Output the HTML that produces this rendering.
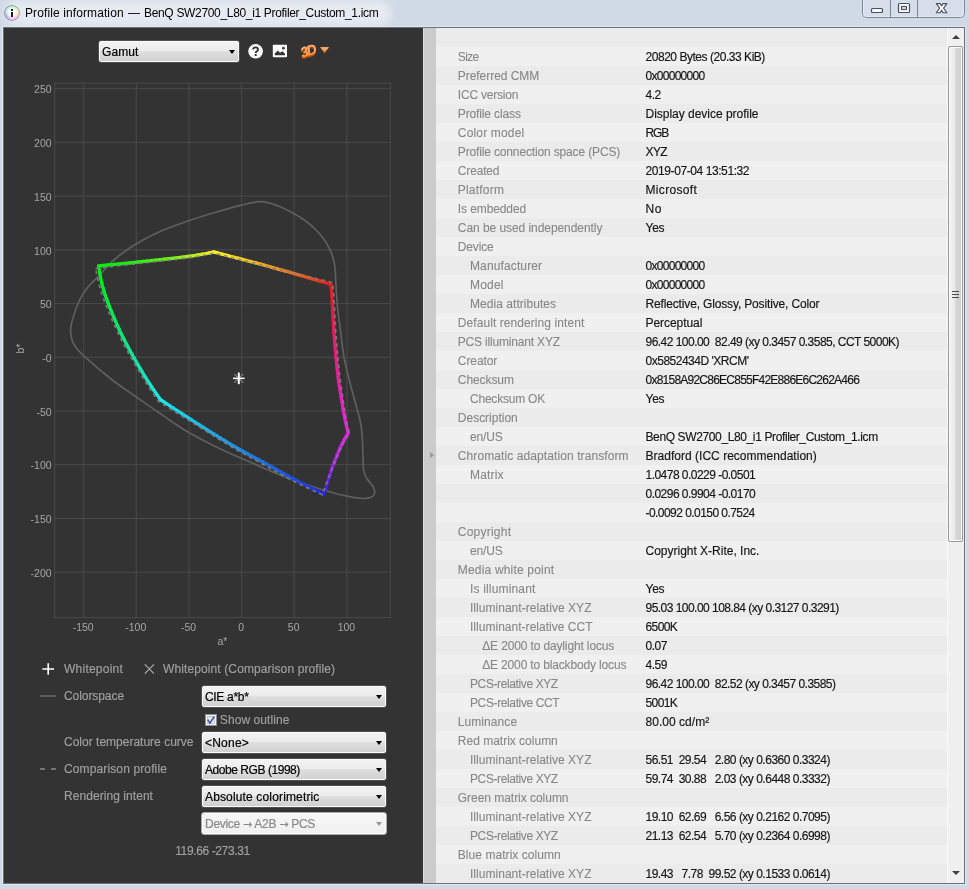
<!DOCTYPE html><html><head><meta charset="utf-8"><title>Profile information</title><style>
html,body{margin:0;padding:0}
body{width:969px;height:889px;position:relative;overflow:hidden;background:#d0d9e6;font-family:"Liberation Sans", sans-serif;font-size:12px;color:#000}
.abs{position:absolute}
.t{position:absolute;white-space:pre;line-height:19px;height:19px}
.tb{will-change:transform}
.row{position:absolute;left:0;width:512px;height:19px}
.lab{color:#878787;-webkit-text-stroke:0.1px #878787}
.val{color:#141414;-webkit-text-stroke:0.15px #141414}
.dd{position:absolute;box-sizing:border-box;border:1px solid #505050;border-radius:3px;box-shadow:inset 0 0 0 1px #fcfcfc;background:linear-gradient(#f3f3f3 0%,#ebebeb 47%,#dedede 51%,#cfcfcf 100%)}
.dd .t{left:3px;top:2px;color:#000;-webkit-text-stroke:0.2px currentColor}
.dd .arr{position:absolute;right:4px;top:9px;width:0;height:0;border-left:3.7px solid transparent;border-right:3.7px solid transparent;border-top:4.2px solid #000}
.ll{color:#a0a0a0;-webkit-text-stroke:0.15px #a0a0a0}
</style></head><body>
<div class="abs" style="left:0;top:0;width:969px;height:28px;background:#d0d9e6;overflow:hidden"><div class="abs" style="left:14px;top:9px;width:368px;height:8px;border-radius:8px;background:rgba(255,255,255,.48);box-shadow:0 0 9px 9px rgba(255,255,255,.48)"></div></div>
<div class="abs" style="left:5px;top:6px;width:14px;height:14px;border-radius:50%;background:radial-gradient(circle,#fff 0%,#fff 30%,rgba(255,255,255,.6) 58%,rgba(255,255,255,0) 88%),conic-gradient(from 0deg,#6fe07f,#e6e070 60deg,#f08484 120deg,#e070e0 180deg,#6464d0 240deg,#70e0e8 300deg,#6fe07f);box-shadow:0 0 0 0.8px rgba(70,75,110,.6)"></div>
<div class="abs" style="left:10.9px;top:9.1px;width:2.2px;height:1.6px;background:#1c1c1c"></div><div class="abs" style="left:10.9px;top:12.1px;width:2.2px;height:4.7px;background:#1c1c1c"></div>
<div class="t tb" style="left:25.0px;top:4px;color:#000"><span style="letter-spacing:0.104px;">Profile information</span></div>
<div class="t tb" style="left:127.9px;top:4px;color:#000"><span style="letter-spacing:0.5px;">—</span></div>
<div class="t tb" style="left:143.8px;top:4px;color:#000"><span style="letter-spacing:-0.327px;">BenQ SW2700_L80_i1 Profiler_Custom_1.icm</span></div>
<svg class="abs" style="left:860px;top:0" width="107" height="20" viewBox="0 0 107 20">
<path d="M2.5 -1 V13.5 Q2.5 17.5 6.5 17.5 H100.5 Q104.5 17.5 104.5 13.5 V-1" fill="#d6deea" stroke="#7d8796" stroke-width="1"/>
<path d="M3.5 0 V13.5 Q3.5 16.5 6.5 16.5 H100.5 Q103.5 16.5 103.5 13.5 V0" fill="none" stroke="#eef2f8" stroke-width="1" opacity="0.7"/>
<path d="M30.5 0 V17 M57.5 0 V17" stroke="#7d8796" stroke-width="1"/>
<rect x="11.5" y="8.5" width="11" height="4" rx="1" fill="#fafafa" stroke="#4a5060" stroke-width="1.2"/>
<rect x="38.5" y="3.5" width="11" height="9" rx="1" fill="#fafafa" stroke="#4a5060" stroke-width="1.2"/>
<rect x="41.5" y="6.5" width="5" height="3" fill="#d6deea" stroke="#4a5060" stroke-width="1.1"/>
<path d="M76.3 3.6 h3.9 l1.4 2.3 l1.4 -2.3 h3.9 l-3.3 4.5 l3.3 4.6 h-3.9 l-1.4 -2.4 l-1.4 2.4 h-3.9 l3.3 -4.6 z" fill="#fafafa" stroke="#4a5060" stroke-width="1.1" stroke-linejoin="round"/>
</svg>
<div class="abs" style="left:3px;top:27px;width:962px;height:857px;background:#6a717c"></div>
<div class="abs" style="left:2px;top:26px;width:964px;height:859px;box-sizing:border-box;border:1px solid #e4eaf2;opacity:.8"></div>
<div class="abs" id="content" style="will-change:transform;left:4px;top:28px;width:960px;height:855px;background:#f0f0f0;overflow:hidden">
<div class="abs" id="left" style="left:0;top:0;width:419px;height:855px;background:#333333;overflow:hidden">
<div class="dd" style="left:94px;top:12px;width:142px;height:23px"><div class="t"><span style="letter-spacing:0.097px;">Gamut</span></div><div class="arr"></div></div>
<svg class="abs" style="left:243px;top:14.5px" width="17" height="17" viewBox="0 0 17 17"><circle cx="8.6" cy="8.3" r="7.3" fill="#ffffff"/>
<path d="M6.2 6.6 Q6.2 4.4 8.6 4.4 Q11 4.4 11 6.4 Q11 7.6 9.8 8.3 Q8.7 8.9 8.7 10" fill="none" stroke="#333" stroke-width="1.9"/><rect x="7.7" y="11" width="2" height="2" fill="#333"/></svg>
<svg class="abs" style="left:268px;top:16px" width="16" height="14" viewBox="0 0 16 14"><rect x="0.8" y="0.8" width="14.2" height="12.4" rx="0.8" fill="#ffffff"/>
<path d="M2.8 11.2 V9.6 L5.8 6.4 L8 8.8 L10.4 7.2 L13 9.8 V11.2 Z" fill="#333"/><circle cx="11.4" cy="4.2" r="1.35" fill="#333"/></svg>
<svg class="abs" style="left:292px;top:10px" width="38" height="26" viewBox="296 38 38 26">
<defs><linearGradient id="g3d" x1="0" y1="0" x2="0" y2="1"><stop offset="0" stop-color="#ffc48c"/><stop offset="1" stop-color="#ff8c34"/></linearGradient>
<linearGradient id="garr" x1="0" y1="0" x2="0" y2="1"><stop offset="0" stop-color="#ffc088"/><stop offset="1" stop-color="#e87420"/></linearGradient></defs>
<g transform="translate(308.0,51.0) rotate(-18)" font-family='&quot;Liberation Sans&quot;, sans-serif' font-size="14" font-weight="bold" font-style="italic" text-anchor="middle" letter-spacing="-1.5">
<text x="-0.9" y="6.3" fill="#a84a10">3D</text><text x="-0.6" y="5.7" fill="#b85414">3D</text><text x="-0.3" y="5.1" fill="#cc621c">3D</text>
<text x="0" y="4.5" fill="url(#g3d)">3D</text></g>
<path d="M320 47 H329.2 L324.6 53.2 Z" fill="url(#garr)" stroke="#8a4410" stroke-width="0.5" stroke-opacity="0.6"/></svg>
<svg class="abs" style="left:0;top:0" width="419" height="855" viewBox="4 28 419 855">
<path d="M83.7 83.1V617.6M136.3 83.1V617.6M189.0 83.1V617.6M241.6 83.1V617.6M294.2 83.1V617.6M346.9 83.1V617.6M54.7 572.2H390.4M54.7 518.5H390.4M54.7 464.7H390.4M54.7 411.0H390.4M54.7 357.3H390.4M54.7 303.6H390.4M54.7 249.9H390.4M54.7 196.1H390.4M54.7 142.4H390.4M54.7 88.7H390.4" stroke="#4a4a4a" stroke-width="1" fill="none"/>
<rect x="54.7" y="83.1" width="335.7" height="534.5" fill="none" stroke="#4a4a4a" stroke-width="1"/>
<text x="51.6" y="576.8" text-anchor="end" font-family="'Liberation Sans', sans-serif" font-size="10.5" fill="#a6a6a6">-200</text>
<text x="51.6" y="523.1" text-anchor="end" font-family="'Liberation Sans', sans-serif" font-size="10.5" fill="#a6a6a6">-150</text>
<text x="51.6" y="469.3" text-anchor="end" font-family="'Liberation Sans', sans-serif" font-size="10.5" fill="#a6a6a6">-100</text>
<text x="51.6" y="415.6" text-anchor="end" font-family="'Liberation Sans', sans-serif" font-size="10.5" fill="#a6a6a6">-50</text>
<text x="51.6" y="361.9" text-anchor="end" font-family="'Liberation Sans', sans-serif" font-size="10.5" fill="#a6a6a6">-0</text>
<text x="51.6" y="308.2" text-anchor="end" font-family="'Liberation Sans', sans-serif" font-size="10.5" fill="#a6a6a6">50</text>
<text x="51.6" y="254.5" text-anchor="end" font-family="'Liberation Sans', sans-serif" font-size="10.5" fill="#a6a6a6">100</text>
<text x="51.6" y="200.7" text-anchor="end" font-family="'Liberation Sans', sans-serif" font-size="10.5" fill="#a6a6a6">150</text>
<text x="51.6" y="147.0" text-anchor="end" font-family="'Liberation Sans', sans-serif" font-size="10.5" fill="#a6a6a6">200</text>
<text x="51.6" y="93.3" text-anchor="end" font-family="'Liberation Sans', sans-serif" font-size="10.5" fill="#a6a6a6">250</text>
<text x="83.2" y="631.3" text-anchor="middle" font-family="'Liberation Sans', sans-serif" font-size="10.5" fill="#a6a6a6">-150</text>
<text x="135.8" y="631.3" text-anchor="middle" font-family="'Liberation Sans', sans-serif" font-size="10.5" fill="#a6a6a6">-100</text>
<text x="188.5" y="631.3" text-anchor="middle" font-family="'Liberation Sans', sans-serif" font-size="10.5" fill="#a6a6a6">-50</text>
<text x="241.1" y="631.3" text-anchor="middle" font-family="'Liberation Sans', sans-serif" font-size="10.5" fill="#a6a6a6">0</text>
<text x="293.7" y="631.3" text-anchor="middle" font-family="'Liberation Sans', sans-serif" font-size="10.5" fill="#a6a6a6">50</text>
<text x="346.4" y="631.3" text-anchor="middle" font-family="'Liberation Sans', sans-serif" font-size="10.5" fill="#a6a6a6">100</text>
<text x="222.5" y="645" text-anchor="middle" font-family="'Liberation Sans', sans-serif" font-size="10.5" fill="#a6a6a6">a*</text>
<text x="0" y="0" transform="translate(24.3,348.5) rotate(-90)" text-anchor="middle" font-family="'Liberation Sans', sans-serif" font-size="10.5" fill="#a6a6a6">b*</text>
<path d="M260.9 201.7C266.8 201.8 271.7 203.6 277.0 205.5C282.3 207.4 288.2 210.5 292.9 213.0C297.6 215.5 301.2 217.8 305.0 220.5C308.8 223.2 312.6 226.6 315.6 229.5C318.6 232.4 320.9 235.2 323.0 238.0C325.1 240.8 326.5 243.3 328.0 246.0C329.5 248.7 330.8 251.2 331.8 254.0C332.8 256.8 333.6 259.8 334.2 262.6C334.8 265.4 335.1 268.3 335.3 271.0C335.5 273.7 335.4 275.0 335.6 279.0C335.8 283.0 336.2 289.8 336.6 295.0C337.0 300.2 337.2 304.2 337.8 310.0C338.4 315.8 339.4 322.2 340.4 330.0C341.4 337.8 342.5 348.5 344.0 357.0C345.5 365.5 347.4 372.8 349.5 381.0C351.6 389.2 354.6 399.9 356.3 406.4C358.1 412.9 359.0 415.2 360.0 420.0C361.0 424.8 361.6 428.7 362.1 434.9C362.6 441.1 362.8 451.3 363.0 457.2C363.2 463.1 363.0 466.6 363.6 470.2C364.2 473.8 365.3 475.9 366.8 478.5C368.3 481.1 371.4 483.7 372.7 486.0C374.0 488.3 374.9 490.6 374.7 492.5C374.5 494.4 373.3 496.1 371.4 497.1C369.4 498.1 367.1 498.6 363.0 498.5C358.9 498.4 353.4 497.6 346.9 496.2C340.4 494.8 332.8 492.8 324.0 490.2C315.2 487.6 303.9 483.9 294.3 480.4C284.7 476.9 275.1 472.8 266.4 469.2C257.7 465.6 249.6 461.9 241.9 458.5C234.2 455.1 229.0 453.2 220.0 448.8C211.0 444.4 197.5 437.5 188.0 432.0C178.5 426.5 171.8 421.4 163.2 415.6C154.6 409.8 145.0 403.0 136.4 397.0C127.8 391.0 120.4 386.4 111.6 379.5C102.8 372.6 90.1 361.7 83.7 355.7C77.3 349.7 75.6 347.4 73.4 343.3C71.2 339.2 70.8 334.9 70.6 331.0C70.4 327.1 70.9 325.2 72.4 320.0C73.9 314.8 77.0 305.5 79.6 300.0C82.2 294.5 84.9 290.9 88.0 287.0C91.1 283.1 93.5 281.4 98.0 276.7C102.5 272.0 108.6 264.5 115.0 259.0C121.4 253.5 128.9 248.3 136.4 243.7C143.9 239.1 151.4 235.3 160.0 231.5C168.6 227.7 178.8 224.2 188.0 221.0C197.2 217.8 206.1 215.1 215.0 212.5C223.9 209.9 233.7 207.0 241.3 205.2C249.0 203.4 254.9 201.6 260.9 201.7Z" fill="none" stroke="#5f5f5f" stroke-width="1.7"/>
<g fill="none" stroke-width="3.3" stroke-linecap="round">
<path d="M98.6 265.9L99.1 265.8L99.7 265.8L100.3 265.7L101.0 265.7" stroke="rgb(0,236,16)"/>
<path d="M101.0 265.7L101.7 265.6L102.4 265.5L103.2 265.5L104.0 265.4" stroke="rgb(1,236,16)"/>
<path d="M104.0 265.4L104.8 265.3L105.7 265.2L106.6 265.1L107.5 265.0" stroke="rgb(3,236,16)"/>
<path d="M107.5 265.0L108.5 265.0L109.4 264.9L110.4 264.8L111.5 264.7" stroke="rgb(6,236,16)"/>
<path d="M111.5 264.7L112.5 264.6L113.6 264.5L114.7 264.4L115.8 264.3" stroke="rgb(10,236,17)"/>
<path d="M115.8 264.3L116.9 264.1L118.1 264.0L119.2 263.9L120.4 263.8" stroke="rgb(14,236,17)"/>
<path d="M120.4 263.8L121.6 263.7L122.8 263.6L124.0 263.4L125.2 263.3" stroke="rgb(20,236,18)"/>
<path d="M125.2 263.3L126.4 263.2L127.6 263.1L128.9 263.0L130.1 262.8" stroke="rgb(27,236,18)"/>
<path d="M130.1 262.8L131.3 262.7L132.5 262.6L133.8 262.5L135.0 262.3" stroke="rgb(35,236,19)"/>
<path d="M135.0 262.3L136.2 262.2L137.1 262.1L138.0 262.0L138.9 261.9" stroke="rgb(43,236,19)"/>
<path d="M138.9 261.9L139.8 261.8L140.8 261.7L141.7 261.6L142.7 261.5" stroke="rgb(50,236,20)"/>
<path d="M142.7 261.5L143.7 261.4L144.7 261.3L145.7 261.2L146.7 261.1" stroke="rgb(57,236,21)"/>
<path d="M146.7 261.1L147.8 261.0L148.8 260.9L149.9 260.8L151.0 260.6" stroke="rgb(66,237,21)"/>
<path d="M151.0 260.6L152.0 260.5L153.1 260.4L154.2 260.3L155.3 260.2" stroke="rgb(75,237,22)"/>
<path d="M155.3 260.2L156.4 260.1L157.5 259.9L158.6 259.8L159.7 259.7" stroke="rgb(85,237,23)"/>
<path d="M159.7 259.7L160.8 259.6L161.9 259.5L163.0 259.3L164.1 259.2" stroke="rgb(95,237,24)"/>
<path d="M164.1 259.2L165.2 259.1L166.3 259.0L167.4 258.9L168.4 258.7" stroke="rgb(106,237,24)"/>
<path d="M168.4 258.7L169.5 258.6L170.6 258.5L171.7 258.4L172.7 258.3" stroke="rgb(117,237,25)"/>
<path d="M172.7 258.3L173.7 258.2L174.8 258.0L175.8 257.9L176.8 257.8" stroke="rgb(128,237,26)"/>
<path d="M176.8 257.8L177.8 257.7L178.8 257.6L179.7 257.5L180.7 257.3" stroke="rgb(139,237,27)"/>
<path d="M180.7 257.3L181.6 257.2L182.5 257.1L183.4 257.0L184.3 256.9" stroke="rgb(150,237,28)"/>
<path d="M184.3 256.9L185.1 256.8L185.9 256.7L186.8 256.6L187.5 256.5" stroke="rgb(159,237,29)"/>
<path d="M187.5 256.5L188.3 256.4L189.8 256.2L191.2 256.0L192.6 255.8" stroke="rgb(172,237,30)"/>
<path d="M192.6 255.8L194.0 255.6L195.3 255.4L196.6 255.2L197.8 255.0" stroke="rgb(188,238,31)"/>
<path d="M197.8 255.0L199.0 254.8L200.2 254.6L201.3 254.4L202.4 254.2" stroke="rgb(203,238,32)"/>
<path d="M202.4 254.2L203.4 254.0L204.4 253.8L205.4 253.7L206.3 253.5" stroke="rgb(217,238,33)"/>
<path d="M206.3 253.5L207.2 253.3L208.0 253.1L208.9 253.0L209.6 252.8" stroke="rgb(229,238,34)"/>
<path d="M209.6 252.8L210.4 252.7L211.1 252.5L211.7 252.4L212.4 252.3" stroke="rgb(240,238,35)"/>
<path d="M212.4 252.3L212.9 252.2L213.5 252.1L214.0 252.0" stroke="rgb(247,238,36)"/>
<path d="M214.0 252.0L214.5 252.1L215.0 252.3L215.6 252.4L216.2 252.6" stroke="rgb(250,238,36)"/>
<path d="M216.2 252.6L216.9 252.7L217.5 252.9L218.2 253.1L218.9 253.3" stroke="rgb(250,236,36)"/>
<path d="M218.9 253.3L219.7 253.5L220.4 253.7L221.2 253.9L222.0 254.1" stroke="rgb(250,234,36)"/>
<path d="M222.0 254.1L222.9 254.3L223.7 254.5L224.6 254.8L225.5 255.0" stroke="rgb(249,231,36)"/>
<path d="M225.5 255.0L226.5 255.2L227.4 255.5L228.4 255.7L229.3 256.0" stroke="rgb(249,227,36)"/>
<path d="M229.3 256.0L230.3 256.3L231.3 256.5L232.4 256.8L233.4 257.1" stroke="rgb(248,222,36)"/>
<path d="M233.4 257.1L234.5 257.3L235.5 257.6L236.6 257.9L237.7 258.2" stroke="rgb(248,217,35)"/>
<path d="M237.7 258.2L238.8 258.4L239.9 258.7L241.0 259.0L242.1 259.3" stroke="rgb(247,211,35)"/>
<path d="M242.1 259.3L243.2 259.6L244.4 259.9L245.5 260.2L246.6 260.5" stroke="rgb(246,204,35)"/>
<path d="M246.6 260.5L247.8 260.8L248.9 261.1L250.1 261.4L251.2 261.7" stroke="rgb(245,197,35)"/>
<path d="M251.2 261.7L252.4 262.0L253.5 262.3L254.7 262.6L255.8 262.9" stroke="rgb(244,190,35)"/>
<path d="M255.8 262.9L256.9 263.2L258.1 263.5L259.2 263.8L260.3 264.1" stroke="rgb(244,182,34)"/>
<path d="M260.3 264.1L261.4 264.4L262.5 264.7L263.6 265.0L264.7 265.3" stroke="rgb(243,175,34)"/>
<path d="M264.7 265.3L265.8 265.6L266.9 265.9L267.9 266.2L269.0 266.5" stroke="rgb(242,167,34)"/>
<path d="M269.0 266.5L270.0 266.7L271.0 267.0L272.0 267.3L273.0 267.6" stroke="rgb(241,159,34)"/>
<path d="M273.0 267.6L273.9 267.8L274.9 268.1L276.0 268.4L277.0 268.7" stroke="rgb(240,152,34)"/>
<path d="M277.0 268.7L278.0 269.0L279.1 269.3L280.1 269.6L281.2 269.9" stroke="rgb(239,144,33)"/>
<path d="M281.2 269.9L282.3 270.2L283.3 270.5L284.4 270.8L285.5 271.1" stroke="rgb(238,135,33)"/>
<path d="M285.5 271.1L286.6 271.4L287.7 271.7L288.9 272.0L290.0 272.4" stroke="rgb(237,126,33)"/>
<path d="M290.0 272.4L291.1 272.7L292.2 273.0L293.3 273.3L294.5 273.7" stroke="rgb(236,117,33)"/>
<path d="M294.5 273.7L295.6 274.0L296.7 274.3L297.8 274.6L299.0 274.9" stroke="rgb(235,108,32)"/>
<path d="M299.0 274.9L300.1 275.3L301.2 275.6L302.3 275.9L303.4 276.2" stroke="rgb(234,98,32)"/>
<path d="M303.4 276.2L304.5 276.5L305.6 276.9L306.6 277.2L307.7 277.5" stroke="rgb(233,89,32)"/>
<path d="M307.7 277.5L308.8 277.8L309.8 278.1L310.9 278.4L311.9 278.7" stroke="rgb(232,79,31)"/>
<path d="M311.9 278.7L312.9 279.0L313.9 279.3L314.9 279.6L315.8 279.9" stroke="rgb(231,70,31)"/>
<path d="M315.8 279.9L316.8 280.1L317.7 280.4L318.7 280.7L319.6 280.9" stroke="rgb(230,61,31)"/>
<path d="M319.6 280.9L320.4 281.2L321.3 281.4L322.1 281.7L323.0 281.9" stroke="rgb(229,53,31)"/>
<path d="M323.0 281.9L323.7 282.2L324.5 282.4L325.3 282.6L326.0 282.8" stroke="rgb(228,45,30)"/>
<path d="M326.0 282.8L326.7 283.0L327.4 283.2L328.0 283.4L328.6 283.6" stroke="rgb(227,38,30)"/>
<path d="M328.6 283.6L329.2 283.7L329.8 283.9L330.3 284.1L330.8 284.2" stroke="rgb(226,33,30)"/>
<path d="M330.8 284.2L330.9 284.8L330.9 285.4L331.0 286.1L331.1 286.9" stroke="rgb(226,30,32)"/>
<path d="M331.1 286.9L331.2 287.8L331.2 288.7L331.3 289.7L331.5 290.8" stroke="rgb(226,30,36)"/>
<path d="M331.5 290.8L331.6 291.9L331.7 293.1L331.8 294.4L331.9 295.7" stroke="rgb(226,30,42)"/>
<path d="M331.9 295.7L332.0 297.1L332.1 298.5L332.2 300.0L332.2 300.8" stroke="rgb(227,30,49)"/>
<path d="M332.2 300.8L332.3 301.6L332.3 302.4L332.4 303.3L332.4 304.2" stroke="rgb(227,30,55)"/>
<path d="M332.4 304.2L332.5 305.1L332.5 306.1L332.6 307.1L332.6 308.1" stroke="rgb(227,30,60)"/>
<path d="M332.6 308.1L332.7 309.1L332.7 310.1L332.8 311.1L332.8 312.2" stroke="rgb(227,30,65)"/>
<path d="M332.8 312.2L332.9 313.2L332.9 314.3L333.0 315.4L333.1 316.5" stroke="rgb(227,30,71)"/>
<path d="M333.1 316.5L333.1 317.5L333.2 318.6L333.2 319.7L333.3 320.8" stroke="rgb(227,30,76)"/>
<path d="M333.3 320.8L333.3 321.8L333.4 322.9L333.4 324.0L333.5 325.0" stroke="rgb(228,30,82)"/>
<path d="M333.5 325.0L333.6 326.0L333.6 327.1L333.7 328.1L333.7 329.0" stroke="rgb(228,30,88)"/>
<path d="M333.7 329.0L333.8 330.0L333.9 331.1L333.9 332.1L334.0 333.2" stroke="rgb(228,30,93)"/>
<path d="M334.0 333.2L334.1 334.2L334.2 335.2L334.2 336.3L334.3 337.3" stroke="rgb(228,30,99)"/>
<path d="M334.3 337.3L334.4 338.3L334.5 339.4L334.6 340.4L334.6 341.4" stroke="rgb(228,30,104)"/>
<path d="M334.6 341.4L334.7 342.4L334.8 343.4L334.9 344.4L335.0 345.4" stroke="rgb(228,30,110)"/>
<path d="M335.0 345.4L335.1 346.4L335.1 347.4L335.2 348.4L335.3 349.4" stroke="rgb(229,30,115)"/>
<path d="M335.3 349.4L335.4 350.4L335.5 351.3L335.6 352.3L335.7 353.2" stroke="rgb(229,30,121)"/>
<path d="M335.7 353.2L335.7 354.2L335.8 355.1L335.9 356.1L336.0 357.0" stroke="rgb(229,30,126)"/>
<path d="M336.0 357.0L336.1 358.1L336.2 359.2L336.3 360.2L336.4 361.3" stroke="rgb(229,30,131)"/>
<path d="M336.4 361.3L336.5 362.3L336.6 363.4L336.7 364.4L336.8 365.5" stroke="rgb(229,30,137)"/>
<path d="M336.8 365.5L336.9 366.5L337.0 367.5L337.1 368.5L337.3 369.5" stroke="rgb(229,30,142)"/>
<path d="M337.3 369.5L337.4 370.5L337.5 371.5L337.6 372.5L337.7 373.4" stroke="rgb(229,30,148)"/>
<path d="M337.7 373.4L337.8 374.4L337.9 375.3L338.0 376.3L338.1 377.2" stroke="rgb(230,30,153)"/>
<path d="M338.1 377.2L338.3 378.2L338.4 379.1L338.5 380.0L338.6 381.1" stroke="rgb(230,30,158)"/>
<path d="M338.6 381.1L338.8 382.2L338.9 383.2L339.1 384.3L339.3 385.3" stroke="rgb(230,30,164)"/>
<path d="M339.3 385.3L339.4 386.3L339.6 387.3L339.7 388.3L339.9 389.3" stroke="rgb(230,30,169)"/>
<path d="M339.9 389.3L340.0 390.3L340.2 391.3L340.4 392.2L340.5 393.2" stroke="rgb(230,30,175)"/>
<path d="M340.5 393.2L340.7 394.2L340.9 395.1L341.0 396.1L341.2 397.1" stroke="rgb(230,30,180)"/>
<path d="M341.2 397.1L341.3 398.0L341.5 399.0L341.7 400.0L341.8 401.1" stroke="rgb(231,30,185)"/>
<path d="M341.8 401.1L342.0 402.1L342.2 403.1L342.3 404.1L342.5 405.1" stroke="rgb(231,30,191)"/>
<path d="M342.5 405.1L342.6 406.2L342.8 407.2L343.0 408.2L343.1 409.2" stroke="rgb(231,30,196)"/>
<path d="M343.1 409.2L343.3 410.2L343.4 411.2L343.6 412.2L343.8 413.1" stroke="rgb(231,30,202)"/>
<path d="M343.8 413.1L344.0 414.1L344.1 415.1L344.3 416.0L344.5 417.0" stroke="rgb(231,30,207)"/>
<path d="M344.5 417.0L344.7 418.1L345.0 419.2L345.2 420.4L345.5 421.5" stroke="rgb(231,30,213)"/>
<path d="M345.5 421.5L345.7 422.7L346.0 423.9L346.3 425.0L346.5 426.2" stroke="rgb(232,30,219)"/>
<path d="M346.5 426.2L346.8 427.3L347.1 428.3L347.3 429.3L347.5 430.3" stroke="rgb(232,30,225)"/>
<path d="M347.5 430.3L347.7 431.1L347.9 431.9L348.1 432.5L348.2 433.1" stroke="rgb(232,30,230)"/>
<path d="M348.2 433.1L347.9 433.6L347.5 434.3L347.0 435.1L346.5 435.9" stroke="rgb(231,30,232)"/>
<path d="M346.5 435.9L345.9 436.9L345.3 437.9L344.7 438.9L344.1 440.0" stroke="rgb(228,30,232)"/>
<path d="M344.1 440.0L343.6 441.0L343.0 442.0L342.5 443.0L342.0 443.9" stroke="rgb(222,31,231)"/>
<path d="M342.0 443.9L341.6 444.9L341.1 445.8L340.7 446.8L340.3 447.7" stroke="rgb(215,31,230)"/>
<path d="M340.3 447.7L339.9 448.7L339.4 449.7L339.0 450.6L338.6 451.6" stroke="rgb(206,31,230)"/>
<path d="M338.6 451.6L338.2 452.5L337.8 453.5L337.4 454.5L337.0 455.4" stroke="rgb(196,32,229)"/>
<path d="M337.0 455.4L336.6 456.4L336.2 457.4L335.8 458.3L335.4 459.3" stroke="rgb(185,32,228)"/>
<path d="M335.4 459.3L335.0 460.3L334.6 461.2L334.2 462.2L333.8 463.1" stroke="rgb(173,33,227)"/>
<path d="M333.8 463.1L333.5 464.0L333.1 465.1L332.7 466.1L332.4 467.1" stroke="rgb(160,34,225)"/>
<path d="M332.4 467.1L332.0 468.1L331.7 469.1L331.3 470.1L331.0 471.2" stroke="rgb(145,34,224)"/>
<path d="M331.0 471.2L330.7 472.2L330.3 473.3L330.0 474.2L329.7 475.2" stroke="rgb(130,35,223)"/>
<path d="M329.7 475.2L329.4 476.1L329.1 477.1L328.8 478.1L328.5 479.1" stroke="rgb(114,36,221)"/>
<path d="M328.5 479.1L328.2 480.1L327.9 481.1L327.6 482.1L327.3 483.0" stroke="rgb(97,37,220)"/>
<path d="M327.3 483.0L327.0 484.0L326.7 485.1L326.3 486.3L326.0 487.4" stroke="rgb(79,38,218)"/>
<path d="M326.0 487.4L325.6 488.6L325.3 489.8L325.0 490.9L324.7 492.0" stroke="rgb(58,39,216)"/>
<path d="M324.7 492.0L324.4 492.9L324.2 493.7L324.0 494.3" stroke="rgb(42,40,215)"/>
<path d="M324.0 494.3L323.5 494.1L323.0 493.8L322.4 493.5L321.8 493.2" stroke="rgb(36,41,214)"/>
<path d="M321.8 493.2L321.1 492.8L320.4 492.5L319.6 492.1L318.8 491.7" stroke="rgb(36,44,214)"/>
<path d="M318.8 491.7L318.0 491.3L317.1 490.9L316.2 490.4L315.3 490.0" stroke="rgb(36,48,215)"/>
<path d="M315.3 490.0L314.4 489.5L313.4 489.0L312.4 488.5L311.4 488.0" stroke="rgb(35,52,215)"/>
<path d="M311.4 488.0L310.4 487.5L309.4 487.0L308.3 486.5L307.3 485.9" stroke="rgb(35,57,216)"/>
<path d="M307.3 485.9L306.2 485.4L305.2 484.9L304.1 484.4L303.1 483.8" stroke="rgb(35,61,216)"/>
<path d="M303.1 483.8L302.0 483.3L301.0 482.8L300.0 482.3L299.0 481.7" stroke="rgb(34,66,216)"/>
<path d="M299.0 481.7L298.0 481.2L297.0 480.7L296.1 480.2L295.2 479.8" stroke="rgb(34,71,217)"/>
<path d="M295.2 479.8L294.3 479.3L293.4 478.8L292.4 478.3L291.5 477.8" stroke="rgb(34,75,217)"/>
<path d="M291.5 477.8L290.6 477.3L289.7 476.8L288.7 476.3L287.8 475.8" stroke="rgb(34,79,218)"/>
<path d="M287.8 475.8L286.9 475.3L286.0 474.8L285.0 474.3L284.1 473.8" stroke="rgb(33,83,218)"/>
<path d="M284.1 473.8L283.2 473.3L282.3 472.8L281.4 472.2L280.5 471.7" stroke="rgb(33,88,218)"/>
<path d="M280.5 471.7L279.6 471.2L278.7 470.7L277.8 470.2L276.9 469.7" stroke="rgb(33,92,219)"/>
<path d="M276.9 469.7L276.0 469.2L275.1 468.7L274.2 468.2L273.3 467.7" stroke="rgb(32,96,219)"/>
<path d="M273.3 467.7L272.4 467.2L271.6 466.7L270.7 466.3L269.8 465.8" stroke="rgb(32,100,220)"/>
<path d="M269.8 465.8L269.0 465.3L268.1 464.8L267.2 464.4L266.4 463.9" stroke="rgb(32,104,220)"/>
<path d="M266.4 463.9L265.4 463.4L264.5 462.9L263.5 462.3L262.6 461.8" stroke="rgb(32,108,220)"/>
<path d="M262.6 461.8L261.6 461.3L260.7 460.8L259.7 460.3L258.8 459.8" stroke="rgb(31,113,221)"/>
<path d="M258.8 459.8L257.9 459.3L257.0 458.8L256.0 458.4L255.1 457.9" stroke="rgb(31,117,221)"/>
<path d="M255.1 457.9L254.2 457.4L253.3 456.9L252.4 456.4L251.5 455.9" stroke="rgb(31,121,222)"/>
<path d="M251.5 455.9L250.6 455.5L249.7 455.0L248.9 454.5L248.0 454.0" stroke="rgb(31,125,222)"/>
<path d="M248.0 454.0L247.1 453.6L246.2 453.1L245.4 452.6L244.5 452.1" stroke="rgb(30,129,222)"/>
<path d="M244.5 452.1L243.6 451.7L242.8 451.2L241.9 450.7L241.0 450.2" stroke="rgb(30,133,223)"/>
<path d="M241.0 450.2L240.1 449.7L239.2 449.2L238.4 448.7L237.5 448.2" stroke="rgb(30,138,223)"/>
<path d="M237.5 448.2L236.7 447.7L235.9 447.3L235.1 446.8L234.2 446.3" stroke="rgb(30,141,224)"/>
<path d="M234.2 446.3L233.4 445.9L232.6 445.4L231.8 444.9L231.0 444.4" stroke="rgb(29,145,224)"/>
<path d="M231.0 444.4L230.2 444.0L229.4 443.5L228.5 443.0L227.7 442.5" stroke="rgb(29,149,224)"/>
<path d="M227.7 442.5L226.8 441.9L225.9 441.4L225.0 440.8L224.0 440.3" stroke="rgb(29,153,225)"/>
<path d="M224.0 440.3L223.1 439.7L222.1 439.1L221.1 438.5L220.0 437.8" stroke="rgb(29,158,225)"/>
<path d="M220.0 437.8L219.3 437.3L218.5 436.9L217.7 436.4L217.0 435.9" stroke="rgb(28,162,225)"/>
<path d="M217.0 435.9L216.2 435.4L215.3 434.9L214.5 434.4L213.7 433.9" stroke="rgb(28,166,226)"/>
<path d="M213.7 433.9L212.8 433.3L212.0 432.8L211.1 432.3L210.2 431.7" stroke="rgb(28,170,226)"/>
<path d="M210.2 431.7L209.3 431.2L208.4 430.6L207.5 430.0L206.6 429.5" stroke="rgb(28,174,227)"/>
<path d="M206.6 429.5L205.7 428.9L204.8 428.3L203.9 427.7L203.0 427.1" stroke="rgb(27,178,227)"/>
<path d="M203.0 427.1L202.1 426.6L201.1 426.0L200.2 425.4L199.3 424.8" stroke="rgb(27,183,227)"/>
<path d="M199.3 424.8L198.4 424.2L197.5 423.7L196.6 423.1L195.7 422.5" stroke="rgb(27,187,228)"/>
<path d="M195.7 422.5L194.8 421.9L193.9 421.4L193.0 420.8L192.2 420.3" stroke="rgb(27,192,228)"/>
<path d="M192.2 420.3L191.3 419.7L190.5 419.2L189.6 418.6L188.8 418.1" stroke="rgb(26,196,229)"/>
<path d="M188.8 418.1L188.0 417.6L187.1 417.0L186.1 416.4L185.1 415.8" stroke="rgb(26,200,229)"/>
<path d="M185.1 415.8L184.2 415.1L183.2 414.5L182.2 413.8L181.2 413.2" stroke="rgb(26,205,229)"/>
<path d="M181.2 413.2L180.2 412.5L179.2 411.9L178.2 411.2L177.1 410.6" stroke="rgb(25,209,230)"/>
<path d="M177.1 410.6L176.1 409.9L175.2 409.3L174.2 408.6L173.2 408.0" stroke="rgb(25,214,230)"/>
<path d="M173.2 408.0L172.2 407.4L171.3 406.8L170.4 406.2L169.5 405.6" stroke="rgb(25,219,231)"/>
<path d="M169.5 405.6L168.6 405.0L167.7 404.4L166.9 403.9L166.1 403.4" stroke="rgb(25,223,231)"/>
<path d="M166.1 403.4L165.3 402.9L164.6 402.4L163.9 401.9L163.2 401.5" stroke="rgb(24,227,232)"/>
<path d="M163.2 401.5L162.6 401.1L162.0 400.7L161.5 400.3L161.0 400.0" stroke="rgb(24,230,232)"/>
<path d="M161.0 400.0L160.5 399.7" stroke="rgb(24,232,232)"/>
<path d="M160.5 399.7L160.2 399.2L159.8 398.7L159.4 398.1L158.9 397.4" stroke="rgb(24,232,230)"/>
<path d="M158.9 397.4L158.4 396.7L157.9 395.9L157.3 395.1L156.7 394.3" stroke="rgb(23,232,225)"/>
<path d="M156.7 394.3L156.1 393.4L155.4 392.4L154.8 391.5L154.1 390.5" stroke="rgb(23,232,219)"/>
<path d="M154.1 390.5L153.4 389.5L152.7 388.5L152.0 387.5L151.4 386.5" stroke="rgb(22,232,212)"/>
<path d="M151.4 386.5L150.7 385.5L150.1 384.5L149.4 383.6L148.8 382.6" stroke="rgb(21,232,205)"/>
<path d="M148.8 382.6L148.3 381.8L147.8 381.0L147.3 380.2L146.7 379.3" stroke="rgb(20,233,199)"/>
<path d="M146.7 379.3L146.2 378.5L145.7 377.6L145.1 376.7L144.6 375.9" stroke="rgb(20,233,193)"/>
<path d="M144.6 375.9L144.1 375.0L143.5 374.1L143.0 373.2L142.5 372.3" stroke="rgb(19,233,187)"/>
<path d="M142.5 372.3L141.9 371.4L141.4 370.5L140.9 369.6L140.3 368.7" stroke="rgb(18,233,181)"/>
<path d="M140.3 368.7L139.8 367.9L139.3 367.0L138.8 366.1L138.3 365.3" stroke="rgb(18,233,175)"/>
<path d="M138.3 365.3L137.8 364.4L137.3 363.6L136.9 362.8L136.4 362.0" stroke="rgb(17,233,170)"/>
<path d="M136.4 362.0L135.8 361.0L135.3 360.0L134.7 359.1L134.2 358.1" stroke="rgb(16,233,164)"/>
<path d="M134.2 358.1L133.7 357.2L133.1 356.3L132.6 355.3L132.1 354.4" stroke="rgb(16,233,157)"/>
<path d="M132.1 354.4L131.6 353.5L131.1 352.6L130.6 351.8L130.2 350.9" stroke="rgb(15,233,151)"/>
<path d="M130.2 350.9L129.7 350.0L129.2 349.2L128.8 348.3L128.3 347.5" stroke="rgb(14,234,146)"/>
<path d="M128.3 347.5L127.9 346.6L127.4 345.8L127.0 345.0L126.5 344.0" stroke="rgb(14,234,140)"/>
<path d="M126.5 344.0L125.9 343.0L125.4 342.1L124.9 341.1L124.5 340.2" stroke="rgb(13,234,134)"/>
<path d="M124.5 340.2L124.0 339.3L123.6 338.4L123.1 337.6L122.7 336.7" stroke="rgb(12,234,128)"/>
<path d="M122.7 336.7L122.2 335.8L121.8 334.9L121.3 333.9L120.8 333.0" stroke="rgb(12,234,122)"/>
<path d="M120.8 333.0L120.4 332.0L119.9 331.0L119.5 330.1L119.1 329.2" stroke="rgb(11,234,116)"/>
<path d="M119.1 329.2L118.7 328.3L118.2 327.4L117.8 326.4L117.4 325.4" stroke="rgb(10,234,110)"/>
<path d="M117.4 325.4L117.0 324.5L116.5 323.5L116.1 322.5L115.7 321.5" stroke="rgb(10,234,104)"/>
<path d="M115.7 321.5L115.3 320.5L114.8 319.6L114.4 318.6L114.0 317.6" stroke="rgb(9,234,98)"/>
<path d="M114.0 317.6L113.6 316.7L113.2 315.8L112.9 314.9L112.5 314.0" stroke="rgb(8,235,92)"/>
<path d="M112.5 314.0L112.1 313.0L111.7 312.0L111.3 311.0L110.9 310.1" stroke="rgb(8,235,86)"/>
<path d="M110.9 310.1L110.5 309.2L110.1 308.3L109.8 307.4L109.4 306.5" stroke="rgb(7,235,80)"/>
<path d="M109.4 306.5L109.1 305.6L108.7 304.7L108.4 303.8L108.0 302.9" stroke="rgb(6,235,74)"/>
<path d="M108.0 302.9L107.7 301.9L107.3 301.0L107.0 300.0L106.7 299.1" stroke="rgb(6,235,69)"/>
<path d="M106.7 299.1L106.3 298.1L106.0 297.2L105.7 296.2L105.3 295.2" stroke="rgb(5,235,63)"/>
<path d="M105.3 295.2L105.0 294.2L104.7 293.3L104.4 292.3L104.0 291.3" stroke="rgb(5,235,57)"/>
<path d="M104.0 291.3L103.7 290.2L103.4 289.2L103.1 288.2L102.8 287.2" stroke="rgb(4,235,51)"/>
<path d="M102.8 287.2L102.5 286.1L102.3 285.1L102.0 284.0L101.8 283.0" stroke="rgb(3,235,44)"/>
<path d="M101.8 283.0L101.5 282.0L101.3 280.9L101.1 279.8L100.8 278.6" stroke="rgb(2,236,38)"/>
<path d="M100.8 278.6L100.6 277.5L100.4 276.3L100.2 275.1L100.0 273.9" stroke="rgb(2,236,31)"/>
<path d="M100.0 273.9L99.8 272.8L99.6 271.7L99.4 270.7L99.3 269.7" stroke="rgb(1,236,25)"/>
<path d="M99.3 269.7L99.1 268.7L99.0 267.9L98.8 267.1L98.7 266.5" stroke="rgb(0,236,19)"/>
<path d="M98.7 266.5L98.6 265.9" stroke="rgb(0,236,16)"/>
</g>
<path d="M95.6 268.4L96.7 268.3L98.0 268.1L99.4 268.0L100.9 267.8L102.6 267.6L104.4 267.4L106.4 267.1L108.4 266.9L110.5 266.7L112.6 266.4L114.9 266.2L117.2 265.9L119.5 265.6L121.9 265.3L124.3 265.1L126.7 264.8L129.1 264.5L131.5 264.2L133.9 264.0L136.2 263.7L138.0 263.5L139.9 263.3L141.8 263.1L143.8 262.9L145.9 262.6L148.0 262.4L150.1 262.2L152.2 262.0L154.4 261.7L156.6 261.5L158.8 261.3L161.0 261.0L163.2 260.8L165.4 260.6L167.5 260.3L169.7 260.1L171.8 259.9L173.8 259.6L175.9 259.4L177.8 259.2L179.8 259.0L181.6 258.7L183.4 258.5L185.1 258.3L186.8 258.1L188.3 257.9L191.2 257.5L194.0 257.1L196.6 256.6L199.0 256.2L201.3 255.8L203.4 255.4L205.4 255.0L207.2 254.6L208.9 254.3L210.4 253.9L211.7 253.7L212.9 253.4L214.0 253.2L214.0 253.2L215.1 253.5L216.3 253.8L217.6 254.1L219.0 254.4L220.5 254.8L222.2 255.2L223.9 255.7L225.7 256.1L227.6 256.6L229.6 257.1L231.6 257.6L233.7 258.1L235.9 258.6L238.1 259.2L240.3 259.7L242.6 260.3L244.9 260.9L247.2 261.5L249.5 262.0L251.9 262.6L254.2 263.2L256.5 263.8L258.8 264.3L261.1 264.9L263.4 265.5L265.6 266.0L267.8 266.6L269.9 267.1L272.0 267.6L273.9 268.1L276.0 268.6L278.0 269.1L280.1 269.6L282.3 270.1L284.5 270.7L286.7 271.2L289.0 271.8L291.2 272.4L293.5 272.9L295.8 273.5L298.1 274.1L300.3 274.6L302.6 275.2L304.8 275.7L307.0 276.3L309.2 276.8L311.3 277.3L313.4 277.9L315.5 278.4L317.4 278.9L319.4 279.3L321.2 279.8L323.0 280.2L324.6 280.6L326.2 281.0L327.7 281.4L329.1 281.7L330.4 282.1L331.6 282.3L332.6 282.6L332.6 282.6L332.7 283.9L332.8 285.4L333.0 287.3L333.2 289.4L333.4 291.8L333.6 294.4L333.8 297.1L334.0 300.0L334.1 301.6L334.2 303.4L334.3 305.2L334.4 307.2L334.5 309.2L334.6 311.2L334.7 313.3L334.8 315.5L334.9 317.6L335.0 319.8L335.1 321.9L335.2 324.0L335.4 326.1L335.5 328.1L335.6 330.0L335.7 332.2L335.9 334.4L336.1 336.5L336.2 338.7L336.4 340.8L336.6 342.9L336.7 345.0L336.9 347.0L337.1 349.1L337.3 351.1L337.4 353.1L337.6 355.1L337.8 357.0L338.0 359.3L338.2 361.5L338.4 363.7L338.6 365.8L338.9 368.0L339.1 370.0L339.3 372.1L339.5 374.1L339.7 376.1L340.0 378.1L340.2 380.0L340.5 382.3L340.8 384.5L341.1 386.7L341.4 388.8L341.7 390.8L342.0 392.9L342.3 394.9L342.6 397.0L342.9 399.0L343.2 401.1L343.5 403.1L343.8 405.1L344.1 407.2L344.4 409.2L344.7 411.2L345.0 413.1L345.4 415.1L345.7 417.0L346.1 419.2L346.6 421.6L347.1 424.0L347.7 426.3L348.2 428.5L348.6 430.4L349.0 432.1L349.3 433.3L349.3 433.3L348.5 434.7L347.2 436.6L345.9 438.9L344.4 441.3L343.2 443.5L342.1 445.6L341.1 447.7L340.1 449.7L339.2 451.9L338.2 454.0L337.2 456.2L336.2 458.4L335.3 460.7L334.4 462.9L333.5 465.0L332.6 467.4L331.7 469.7L330.9 471.9L330.0 474.3L329.2 476.4L328.4 478.5L327.6 480.7L326.8 482.9L326.0 485.0L325.2 487.2L324.3 489.5L323.5 491.6L322.8 493.5L322.3 494.8L322.3 494.8L321.2 494.3L320.0 493.7L318.5 493.0L316.8 492.3L315.0 491.4L313.1 490.5L311.1 489.6L309.0 488.6L306.8 487.6L304.7 486.6L302.5 485.5L300.3 484.5L298.2 483.5L296.2 482.5L294.3 481.5L292.4 480.5L290.5 479.5L288.7 478.5L286.8 477.5L284.9 476.5L283.0 475.4L281.1 474.4L279.2 473.3L277.3 472.3L275.4 471.2L273.6 470.2L271.8 469.2L269.9 468.2L268.2 467.2L266.4 466.2L264.4 465.1L262.4 464.0L260.5 462.9L258.5 461.9L256.6 460.8L254.7 459.8L252.8 458.8L251.0 457.8L249.1 456.8L247.3 455.7L245.5 454.7L243.7 453.7L241.9 452.7L240.0 451.6L238.2 450.6L236.5 449.6L234.8 448.6L233.1 447.6L231.4 446.7L229.7 445.6L228.0 444.6L226.1 443.5L224.2 442.4L222.2 441.1L220.0 439.8L218.5 438.9L216.9 437.9L215.2 436.9L213.5 435.8L211.8 434.7L210.0 433.6L208.2 432.5L206.3 431.3L204.5 430.1L202.6 429.0L200.7 427.8L198.8 426.6L197.0 425.4L195.1 424.3L193.3 423.1L191.5 422.0L189.7 420.9L188.0 419.8L186.2 418.6L184.2 417.5L182.3 416.2L180.3 415.0L178.3 413.7L176.2 412.5L174.2 411.2L172.3 410.0L170.3 408.8L168.5 407.6L166.7 406.5L165.0 405.5L163.4 404.5L162.0 403.6L160.7 402.8L159.6 402.1L158.6 401.5L158.6 401.5L157.9 400.5L157.0 399.2L156.0 397.6L154.8 395.9L153.5 394.1L152.1 392.1L150.8 390.1L149.4 388.0L148.1 386.0L146.8 384.0L145.8 382.4L144.7 380.7L143.6 378.9L142.5 377.1L141.5 375.3L140.4 373.5L139.3 371.6L138.2 369.8L137.2 368.1L136.1 366.3L135.1 364.6L134.2 363.0L133.0 360.9L131.8 358.9L130.7 356.9L129.6 355.0L128.5 353.1L127.5 351.3L126.5 349.5L125.5 347.7L124.6 346.0L123.5 343.9L122.4 341.9L121.4 339.9L120.4 338.1L119.5 336.1L118.5 334.1L117.5 332.0L116.7 330.2L115.8 328.4L115.0 326.4L114.1 324.5L113.2 322.5L112.4 320.6L111.6 318.6L110.8 316.8L110.0 315.0L109.1 312.9L108.2 310.8L107.4 308.9L106.6 307.0L105.8 305.1L105.1 303.1L104.3 301.0L103.6 299.1L102.9 297.2L102.3 295.2L101.6 293.2L101.0 291.1L100.4 289.1L99.8 287.0L99.2 285.0L98.7 282.8L98.1 280.5L97.6 278.1L97.1 275.7L96.6 273.4L96.2 271.4L95.9 269.7L95.6 268.4Z" fill="none" stroke="#828282" stroke-width="1.8" stroke-dasharray="3.6 3.6" stroke-opacity="0.82"/>
<path d="M234.30 373.95L243.30 382.75M234.30 382.75L243.30 373.95" stroke="#767676" stroke-width="1.5" fill="none"/>
<path d="M233.00 378.35H244.60" stroke="#ffffff" stroke-width="1.5" fill="none"/><path d="M238.8 372.55V384.15" stroke="#ffffff" stroke-width="2.0" fill="none"/>
</svg>
<svg class="abs" style="left:36px;top:632px" width="120" height="120" viewBox="40 660 120 120"><path d="M42.4 669H54M48.2 663.2V674.8" stroke="#ffffff" stroke-width="1.6" fill="none"/><path d="M144.8 664.4L154 673.6M144.8 673.6L154 664.4" stroke="#a8a8a8" stroke-width="1.3" fill="none"/><path d="M40 696H56" stroke="#6a6a6a" stroke-width="1.5"/><path d="M40 769H45M51 769H56" stroke="#8a8a8a" stroke-width="1.7"/></svg>
<div class="t ll" style="left:60.0px;top:631.5px"><span style="letter-spacing:0.24px;">Whitepoint</span></div>
<div class="t ll" style="left:159.0px;top:631.5px"><span style="letter-spacing:0.112px;">Whitepoint (Comparison profile)</span></div>
<div class="t ll" style="left:60.0px;top:658.5px"><span style="letter-spacing:-0.07px;">Colorspace</span></div>
<div class="dd" style="left:197px;top:657px;width:186px;height:23px;"><div class="t" style="color:#000"><span style="letter-spacing:-0.316px;">CIE a*b*</span></div><div class="arr" style="border-top-color:#000"></div></div>
<div class="abs" style="left:201.3px;top:685.5px;width:12px;height:12px;box-sizing:border-box;border:1px solid #8e8f8f;background:linear-gradient(135deg,#dcdcdc,#f6f6f6);box-shadow:inset 0 0 0 1px #f4f4f4, inset 0 0 0 2px #c0c4cc"></div>
<svg class="abs" style="left:201.3px;top:685.5px" width="12" height="12" viewBox="0.5 0.5 12 12"><path d="M3.2 6.2L5.4 9.6L9.8 3" fill="none" stroke="#4052a4" stroke-width="1.5"/></svg>
<div class="t ll" style="left:215.8px;top:683.0px"><span style="letter-spacing:0.082px;">Show outline</span></div>
<div class="t ll" style="left:60.0px;top:704.5px"><span style="letter-spacing:0.005px;">Color temperature curve</span></div>
<div class="dd" style="left:197px;top:703px;width:186px;height:23px;"><div class="t" style="color:#000"><span style="letter-spacing:0.216px;">&lt;None&gt;</span></div><div class="arr" style="border-top-color:#000"></div></div>
<div class="t ll" style="left:60.0px;top:731.5px"><span style="letter-spacing:0.127px;">Comparison profile</span></div>
<div class="dd" style="left:197px;top:730px;width:186px;height:23px;"><div class="t" style="color:#000"><span style="letter-spacing:-0.448px;">Adobe RGB (1998)</span></div><div class="arr" style="border-top-color:#000"></div></div>
<div class="t ll" style="left:60.0px;top:758.5px"><span style="letter-spacing:0.059px;">Rendering intent</span></div>
<div class="dd" style="left:197px;top:757px;width:186px;height:23px;"><div class="t" style="color:#000"><span style="letter-spacing:0.149px;">Absolute colorimetric</span></div><div class="arr" style="border-top-color:#000"></div></div>
<div class="dd" style="left:197px;top:784px;width:186px;height:23px;background:linear-gradient(#f6f6f6,#f0f0f0);border-color:#a8a8a8;"><div class="t" style="color:#8a8a8a"><span style="letter-spacing:-0.286px;">Device <span style="font-family:'DejaVu Sans',sans-serif;font-size:11px">→</span> A2B <span style="font-family:'DejaVu Sans',sans-serif;font-size:11px">→</span> PCS</span></div><div class="arr" style="border-top-color:#9a9a9a"></div></div>
<div class="t ll" style="left:171.2px;top:813.5px"><span style="letter-spacing:-0.376px;">119.66 -273.31</span></div>
</div>
<div class="abs" style="left:419px;top:0;width:13px;height:855px;background:#cbcbcb;border-left:1px solid #dedede;box-sizing:border-box"></div>
<div class="abs" style="left:425.8px;top:424.3px;width:0;height:0;border-top:3.2px solid transparent;border-bottom:3.2px solid transparent;border-left:4px solid #989898"></div>
<div class="abs" id="right" style="left:432px;top:0;width:511px;height:855px;overflow:hidden">
<div class="row" style="top:0px;background:#ebebeb"></div>
<div class="row" style="top:19px;background:#f0f0f0"><div class="t lab" style="left:21.8px;top:1px"><span style="letter-spacing:-0.661px;">Size</span></div><div class="t val" style="left:209.5px;top:1px"><span style="letter-spacing:-0.464px;">20820 Bytes (20.33 KiB)</span></div></div>
<div class="row" style="top:38px;background:#ebebeb"><div class="t lab" style="left:21.8px;top:1px"><span style="letter-spacing:-0.047px;">Preferred CMM</span></div><div class="t val" style="left:209.5px;top:1px"><span style="letter-spacing:-0.708px;">0x00000000</span></div></div>
<div class="row" style="top:57px;background:#f0f0f0"><div class="t lab" style="left:21.8px;top:1px"><span style="letter-spacing:-0.208px;">ICC version</span></div><div class="t val" style="left:209.5px;top:1px"><span style="letter-spacing:-0.496px;">4.2</span></div></div>
<div class="row" style="top:76px;background:#ebebeb"><div class="t lab" style="left:21.8px;top:1px"><span style="letter-spacing:-0.13px;">Profile class</span></div><div class="t val" style="left:209.5px;top:1px"><span style="letter-spacing:-0.018px;">Display device profile</span></div></div>
<div class="row" style="top:95px;background:#f0f0f0"><div class="t lab" style="left:21.8px;top:1px"><span style="letter-spacing:0.172px;">Color model</span></div><div class="t val" style="left:209.5px;top:1px"><span style="letter-spacing:-1.172px;">RGB</span></div></div>
<div class="row" style="top:114px;background:#ebebeb"><div class="t lab" style="left:21.8px;top:1px"><span style="letter-spacing:-0.148px;">Profile connection space (PCS)</span></div><div class="t val" style="left:209.5px;top:1px"><span style="letter-spacing:-0.581px;">XYZ</span></div></div>
<div class="row" style="top:133px;background:#f0f0f0"><div class="t lab" style="left:21.8px;top:1px"><span style="letter-spacing:-0.158px;">Created</span></div><div class="t val" style="left:209.5px;top:1px"><span style="letter-spacing:-0.413px;">2019-07-04 13:51:32</span></div></div>
<div class="row" style="top:152px;background:#ebebeb"><div class="t lab" style="left:21.8px;top:1px"><span style="letter-spacing:0.202px;">Platform</span></div><div class="t val" style="left:209.5px;top:1px"><span style="letter-spacing:0.335px;">Microsoft</span></div></div>
<div class="row" style="top:171px;background:#f0f0f0"><div class="t lab" style="left:21.8px;top:1px"><span style="letter-spacing:-0.099px;">Is embedded</span></div><div class="t val" style="left:209.5px;top:1px"><span style="letter-spacing:0.528px;">No</span></div></div>
<div class="row" style="top:190px;background:#ebebeb"><div class="t lab" style="left:21.8px;top:1px"><span style="letter-spacing:-0.061px;">Can be used independently</span></div><div class="t val" style="left:209.5px;top:1px"><span style="letter-spacing:-0.226px;">Yes</span></div></div>
<div class="row" style="top:209px;background:#f0f0f0"><div class="t lab" style="left:21.8px;top:1px"><span style="letter-spacing:-0.165px;">Device</span></div></div>
<div class="row" style="top:228px;background:#ebebeb"><div class="t lab" style="left:34.0px;top:1px"><span style="letter-spacing:0.125px;">Manufacturer</span></div><div class="t val" style="left:209.5px;top:1px"><span style="letter-spacing:-0.708px;">0x00000000</span></div></div>
<div class="row" style="top:247px;background:#f0f0f0"><div class="t lab" style="left:34.0px;top:1px"><span style="letter-spacing:0.203px;">Model</span></div><div class="t val" style="left:209.5px;top:1px"><span style="letter-spacing:-0.708px;">0x00000000</span></div></div>
<div class="row" style="top:266px;background:#ebebeb"><div class="t lab" style="left:34.0px;top:1px"><span style="letter-spacing:0.044px;">Media attributes</span></div><div class="t val" style="left:209.5px;top:1px"><span style="letter-spacing:-0.153px;">Reflective, Glossy, Positive, Color</span></div></div>
<div class="row" style="top:285px;background:#f0f0f0"><div class="t lab" style="left:21.8px;top:1px"><span style="letter-spacing:0.073px;">Default rendering intent</span></div><div class="t val" style="left:209.5px;top:1px"><span style="letter-spacing:-0.058px;">Perceptual</span></div></div>
<div class="row" style="top:304px;background:#ebebeb"><div class="t lab" style="left:21.8px;top:1px"><span style="letter-spacing:-0.182px;">PCS illuminant XYZ</span></div><div class="t val" style="left:209.5px;top:1px"><span style="letter-spacing:-0.527px;">96.42 100.00  82.49 (xy 0.3457 0.3585, CCT 5000K)</span></div></div>
<div class="row" style="top:323px;background:#f0f0f0"><div class="t lab" style="left:21.8px;top:1px"><span style="letter-spacing:-0.074px;">Creator</span></div><div class="t val" style="left:209.5px;top:1px"><span style="letter-spacing:-0.489px;">0x5852434D &#x27;XRCM&#x27;</span></div></div>
<div class="row" style="top:342px;background:#ebebeb"><div class="t lab" style="left:21.8px;top:1px"><span style="letter-spacing:-0.086px;">Checksum</span></div><div class="t val" style="left:209.5px;top:1px"><span style="letter-spacing:-0.763px;">0x8158A92C86EC855F42E886E6C262A466</span></div></div>
<div class="row" style="top:361px;background:#f0f0f0"><div class="t lab" style="left:34.0px;top:1px"><span style="letter-spacing:-0.214px;">Checksum OK</span></div><div class="t val" style="left:209.5px;top:1px"><span style="letter-spacing:-0.226px;">Yes</span></div></div>
<div class="row" style="top:380px;background:#ebebeb"><div class="t lab" style="left:21.8px;top:1px"><span style="letter-spacing:-0.003px;">Description</span></div></div>
<div class="row" style="top:399px;background:#f0f0f0"><div class="t lab" style="left:34.0px;top:1px"><span style="letter-spacing:-0.152px;">en/US</span></div><div class="t val" style="left:209.5px;top:1px"><span style="letter-spacing:-0.379px;">BenQ SW2700_L80_i1 Profiler_Custom_1.icm</span></div></div>
<div class="row" style="top:418px;background:#ebebeb"><div class="t lab" style="left:21.8px;top:1px"><span style="letter-spacing:0.094px;">Chromatic adaptation transform</span></div><div class="t val" style="left:209.5px;top:1px"><span style="letter-spacing:0.02px;">Bradford (ICC recommendation)</span></div></div>
<div class="row" style="top:437px;background:#f0f0f0"><div class="t lab" style="left:34.0px;top:1px"><span style="letter-spacing:0.171px;">Matrix</span></div><div class="t val" style="left:209.5px;top:1px"><span style="letter-spacing:-0.528px;">1.0478 0.0229 -0.0501</span></div></div>
<div class="row" style="top:456px;background:#ebebeb"><div class="t val" style="left:209.5px;top:1px"><span style="letter-spacing:-0.528px;">0.0296 0.9904 -0.0170</span></div></div>
<div class="row" style="top:475px;background:#f0f0f0"><div class="t val" style="left:209.5px;top:1px"><span style="letter-spacing:-0.551px;">-0.0092 0.0150 0.7524</span></div></div>
<div class="row" style="top:494px;background:#ebebeb"><div class="t lab" style="left:21.8px;top:1px"><span style="letter-spacing:0.227px;">Copyright</span></div></div>
<div class="row" style="top:513px;background:#f0f0f0"><div class="t lab" style="left:34.0px;top:1px"><span style="letter-spacing:-0.152px;">en/US</span></div><div class="t val" style="left:209.5px;top:1px"><span style="letter-spacing:-0.007px;">Copyright X-Rite, Inc.</span></div></div>
<div class="row" style="top:532px;background:#ebebeb"><div class="t lab" style="left:21.8px;top:1px"><span style="letter-spacing:0.183px;">Media white point</span></div></div>
<div class="row" style="top:551px;background:#f0f0f0"><div class="t lab" style="left:34.0px;top:1px"><span style="letter-spacing:0.165px;">Is illuminant</span></div><div class="t val" style="left:209.5px;top:1px"><span style="letter-spacing:-0.226px;">Yes</span></div></div>
<div class="row" style="top:570px;background:#ebebeb"><div class="t lab" style="left:34.0px;top:1px"><span style="letter-spacing:0.034px;">Illuminant-relative XYZ</span></div><div class="t val" style="left:209.5px;top:1px"><span style="letter-spacing:-0.532px;">95.03 100.00 108.84 (xy 0.3127 0.3291)</span></div></div>
<div class="row" style="top:589px;background:#f0f0f0"><div class="t lab" style="left:34.0px;top:1px"><span style="letter-spacing:0.024px;">Illuminant-relative CCT</span></div><div class="t val" style="left:209.5px;top:1px"><span style="letter-spacing:-0.601px;">6500K</span></div></div>
<div class="row" style="top:608px;background:#ebebeb"><div class="t lab" style="left:46.2px;top:1px"><span style="letter-spacing:-0.138px;">ΔE 2000 to daylight locus</span></div><div class="t val" style="left:209.5px;top:1px"><span style="letter-spacing:-0.49px;">0.07</span></div></div>
<div class="row" style="top:627px;background:#f0f0f0"><div class="t lab" style="left:46.2px;top:1px"><span style="letter-spacing:-0.154px;">ΔE 2000 to blackbody locus</span></div><div class="t val" style="left:209.5px;top:1px"><span style="letter-spacing:-0.49px;">4.59</span></div></div>
<div class="row" style="top:646px;background:#ebebeb"><div class="t lab" style="left:34.0px;top:1px"><span style="letter-spacing:-0.389px;">PCS-relative XYZ</span></div><div class="t val" style="left:209.5px;top:1px"><span style="letter-spacing:-0.533px;">96.42 100.00  82.52 (xy 0.3457 0.3585)</span></div></div>
<div class="row" style="top:665px;background:#f0f0f0"><div class="t lab" style="left:34.0px;top:1px"><span style="letter-spacing:-0.379px;">PCS-relative CCT</span></div><div class="t val" style="left:209.5px;top:1px"><span style="letter-spacing:-0.601px;">5001K</span></div></div>
<div class="row" style="top:684px;background:#ebebeb"><div class="t lab" style="left:21.8px;top:1px"><span style="letter-spacing:0.076px;">Luminance</span></div><div class="t val" style="left:209.5px;top:1px"><span style="letter-spacing:0.03px;">80.00 cd/m²</span></div></div>
<div class="row" style="top:703px;background:#f0f0f0"><div class="t lab" style="left:21.8px;top:1px"><span style="letter-spacing:-0.002px;">Red matrix column</span></div></div>
<div class="row" style="top:722px;background:#ebebeb"><div class="t lab" style="left:34.0px;top:1px"><span style="letter-spacing:0.034px;">Illuminant-relative XYZ</span></div><div class="t val" style="left:209.5px;top:1px"><span style="letter-spacing:-0.502px;">56.51  29.54   2.80 (xy 0.6360 0.3324)</span></div></div>
<div class="row" style="top:741px;background:#f0f0f0"><div class="t lab" style="left:34.0px;top:1px"><span style="letter-spacing:-0.389px;">PCS-relative XYZ</span></div><div class="t val" style="left:209.5px;top:1px"><span style="letter-spacing:-0.502px;">59.74  30.88   2.03 (xy 0.6448 0.3332)</span></div></div>
<div class="row" style="top:760px;background:#ebebeb"><div class="t lab" style="left:21.8px;top:1px"><span style="letter-spacing:-0.036px;">Green matrix column</span></div></div>
<div class="row" style="top:779px;background:#f0f0f0"><div class="t lab" style="left:34.0px;top:1px"><span style="letter-spacing:0.034px;">Illuminant-relative XYZ</span></div><div class="t val" style="left:209.5px;top:1px"><span style="letter-spacing:-0.502px;">19.10  62.69   6.56 (xy 0.2162 0.7095)</span></div></div>
<div class="row" style="top:798px;background:#ebebeb"><div class="t lab" style="left:34.0px;top:1px"><span style="letter-spacing:-0.389px;">PCS-relative XYZ</span></div><div class="t val" style="left:209.5px;top:1px"><span style="letter-spacing:-0.502px;">21.13  62.54   5.70 (xy 0.2364 0.6998)</span></div></div>
<div class="row" style="top:817px;background:#f0f0f0"><div class="t lab" style="left:21.8px;top:1px"><span style="letter-spacing:0.053px;">Blue matrix column</span></div></div>
<div class="row" style="top:836px;background:#ebebeb"><div class="t lab" style="left:34.0px;top:1px"><span style="letter-spacing:0.034px;">Illuminant-relative XYZ</span></div><div class="t val" style="left:209.5px;top:1px"><span style="letter-spacing:-0.502px;">19.43   7.78  99.52 (xy 0.1533 0.0614)</span></div></div>
</div>
<div class="abs" style="left:943px;top:0;width:17px;height:855px;background:#f0f0f0;border-left:1px solid #f8f8f8;box-sizing:border-box">
<div class="abs" style="left:4px;top:7px;width:0;height:0;border-left:4px solid transparent;border-right:4px solid transparent;border-bottom:4px solid #404040"></div>
<div class="abs" style="left:4px;top:843px;width:0;height:0;border-left:4px solid transparent;border-right:4px solid transparent;border-top:4px solid #404040"></div>
<div class="abs" style="left:0;top:18px;width:15px;height:496px;box-sizing:border-box;border:1px solid #979797;border-radius:2px;background:linear-gradient(90deg,#f4f4f4 0%,#e9e9e9 45%,#d4d4d4 55%,#d0d0d0 100%);box-shadow:inset 0 0 0 1px #fbfbfb"></div>
<div class="abs" style="left:4px;top:263px;width:7px;height:1px;background:#4a4a4a;box-shadow:0 3px 0 #4a4a4a,0 6px 0 #4a4a4a"></div>
</div>
</div>
</body></html>
